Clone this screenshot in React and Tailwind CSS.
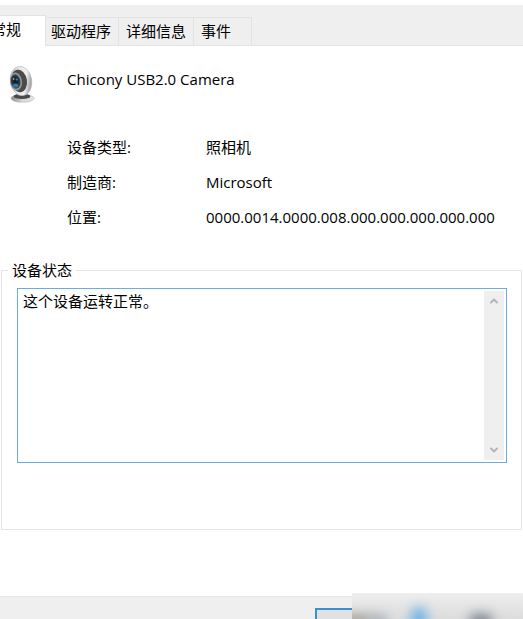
import React, { useState } from 'react';
import { ChevronDown, ChevronUp } from 'lucide-react';

const TABS = ['常规', '驱动程序', '详细信息', '事件'];

const DETAILS = [
  { label: '设备类型:', value: '照相机' },
  { label: '制造商:', value: 'Microsoft' },
  { label: '位置:', value: '0000.0014.0000.008.000.000.000.000.000' },
];

const WebcamIcon = () => (
  <svg viewBox="0 0 30 40" className="w-[30px] h-10 shrink-0" aria-hidden="true">
    <defs>
      <linearGradient id="shell" x1="0" y1="0" x2="1" y2="0.4">
        <stop offset="0" stopColor="#b4b4b4" />
        <stop offset="0.5" stopColor="#e9e9e9" />
        <stop offset="0.8" stopColor="#f0f0f0" />
        <stop offset="1" stopColor="#a8a8a8" />
      </linearGradient>
      <linearGradient id="base" x1="0" y1="0" x2="1" y2="0">
        <stop offset="0" stopColor="#8b8b8b" />
        <stop offset="0.5" stopColor="#d9d9d9" />
        <stop offset="1" stopColor="#e4e4e4" />
      </linearGradient>
      <radialGradient id="lens">
        <stop offset="0" stopColor="#0d1820" />
        <stop offset="0.6" stopColor="#1f2f3b" />
        <stop offset="1" stopColor="#3d464c" />
      </radialGradient>
    </defs>
    {/* stand */}
    <ellipse cx="15.5" cy="34.3" rx="11.6" ry="4" fill="url(#base)" stroke="#b0b0b0" strokeWidth="0.5" />
    <ellipse cx="15" cy="32.4" rx="8.4" ry="2.7" fill="#4a4a4a" />
    {/* body */}
    <ellipse cx="14" cy="17" rx="10.8" ry="14.8" transform="rotate(-9 14 17)" fill="url(#shell)" stroke="#b9b9b9" strokeWidth="0.6" />
    <ellipse cx="12" cy="17" rx="8" ry="11.4" transform="rotate(-9 12 17)" fill="#4b4b4b" />
    <ellipse cx="9" cy="17.5" rx="6" ry="9" transform="rotate(-9 9 17.5)" fill="#969696" />
    <ellipse cx="8.6" cy="17.5" rx="4.8" ry="7.2" transform="rotate(-9 8.6 17.5)" fill="url(#lens)" />
    <ellipse cx="8.6" cy="21.4" rx="2.8" ry="2" fill="#3279a8" />
    <circle cx="9.8" cy="15.5" r="1.1" fill="#3f82ad" />
    <circle cx="6.6" cy="15" r="0.9" fill="#8fa0ab" />
  </svg>
);

const App = () => {
  const [activeTab, setActiveTab] = useState('常规');

  return (
    <div className="relative flex flex-col h-screen overflow-hidden pt-[5px] bg-white text-[15px] leading-5 text-black font-['Open_Sans','Noto_Sans_CJK_SC',sans-serif]">
      {/* --- Tab strip --- */}
      <div role="tablist" className="flex items-end shrink-0 h-[41px] bg-[#efefef] border-b border-[#e3e3e3]">
        {TABS.map((tab, index) => (
          <button
            key={tab}
            type="button"
            role="tab"
            aria-selected={activeTab === tab}
            onClick={() => setActiveTab(tab)}
            className={`flex items-center whitespace-nowrap border-t border-r border-[#e3e3e3] ${
              index === 0 ? 'w-[46px] justify-end overflow-hidden pr-6' : ''
            } ${index === 1 ? 'w-[73px] pl-[5px]' : ''} ${index === 2 ? 'w-[75px] pl-[7px]' : ''} ${
              index === 3 ? 'w-[58px] pl-[7px]' : ''
            } ${activeTab === tab ? 'h-[31px] -mb-px pb-1 bg-white' : 'h-7 pb-0.5'}`}
          >
            {tab}
          </button>
        ))}
      </div>

      <main className="shrink-0 pt-[18px]">
        {/* --- Device name --- */}
        <div className="flex pl-[7px]">
          <WebcamIcon />
          <h1 className="pl-[30px] pt-[5px]">Chicony USB2.0 Camera</h1>
        </div>

        <dl className="flex flex-col gap-[15px] pt-[33px] pl-[67px]">
          {DETAILS.map((item) => (
            <div key={item.label} className="flex">
              <dt className="w-[139px] shrink-0">{item.label}</dt>
              <dd className="whitespace-nowrap">{item.value}</dd>
            </div>
          ))}
        </dl>

        {/* --- Device status --- */}
        <fieldset className="mt-[33px] mx-px px-[15px] pb-[66px] border border-[#e6e6e6]">
          <legend className="-ml-[9px] px-1">
            <label htmlFor="status">设备状态</label>
          </legend>
          <div className="flex mt-2 -mr-px h-[175px] border border-[#69ade5] bg-white">
            <textarea
              id="status"
              readOnly
              defaultValue="这个设备运转正常。"
              className="flex-1 min-w-0 px-[5px] pt-0.5 resize-none outline-none overflow-hidden"
            />
            <div className="flex flex-col justify-between w-5 my-0.5 mr-0.5 py-1 bg-[#efefef] text-[#b5b5b5]">
              <button type="button" aria-label="Scroll up" className="flex justify-center">
                <ChevronUp size={12} strokeWidth={4} />
              </button>
              <button type="button" aria-label="Scroll down" className="flex justify-center">
                <ChevronDown size={12} strokeWidth={4} />
              </button>
            </div>
          </div>
        </fieldset>
      </main>

      {/* --- Footer --- */}
      <footer className="flex justify-end shrink-0 mt-auto h-[23px] pt-[11px] pr-[95px] overflow-hidden bg-[#efefef] border-t border-[#e6e6e6]">
        <button type="button" aria-label="OK" className="w-[113px] h-8 shrink-0 border-2 border-[#388fd4] bg-[#e1e1e1]" />
      </footer>

      {/* frosted patch over the corner */}
      <div className="absolute right-0 bottom-0 w-[171px] h-[26px] overflow-hidden bg-linear-to-b from-[#eeeeee] to-[#dcdcdc]">
        <div className="absolute -left-3 top-[22px] w-8 h-3 rounded-full bg-[#a39c92] blur-[6px]" />
        <div className="absolute left-4 top-[22px] w-5 h-3 rounded-full bg-[#a3adb8] blur-[6px]" />
        <div className="absolute left-[59px] top-3.5 w-4 h-6 rounded-full bg-[#6fb2e6] blur-[6px]" />
        <div className="absolute left-[117px] top-[21px] w-6 h-3.5 rounded-full bg-[#7b828e] blur-[6px]" />
      </div>
    </div>
  );
};

export default App;
